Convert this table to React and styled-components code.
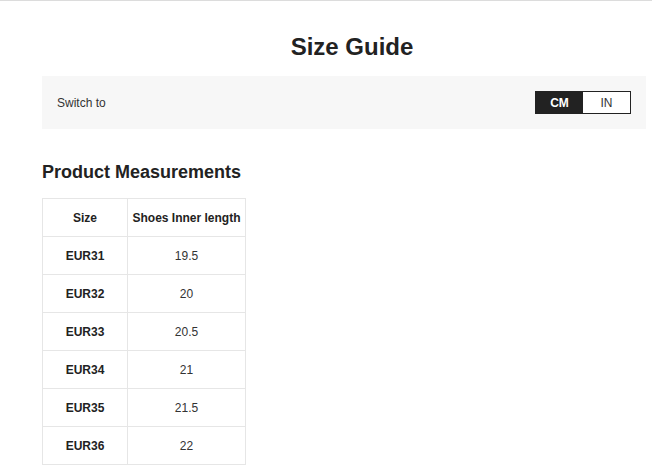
import React from "react";
import styled, { createGlobalStyle } from "styled-components";

const GlobalStyle = createGlobalStyle`
  body {
    margin: 0;
    background: #fff;
    font-family: "Liberation Sans", Arial, sans-serif;
    color: #222;
  }
`;

const rows = [
  ["EUR31", "19.5"],
  ["EUR32", "20"],
  ["EUR33", "20.5"],
  ["EUR34", "21"],
  ["EUR35", "21.5"],
  ["EUR36", "22"],
];

const Page = styled.div`
  border-top: 1px solid #dcdcdc;
  padding: 0 6px 0 42px;
`;

const Title = styled.h1`
  margin: 0;
  padding: 32px 0 0 16px;
  height: 43px;
  text-align: center;
  font-size: 24px;
  font-weight: bold;
  color: #222;
`;

const SwitchBar = styled.div`
  display: flex;
  align-items: center;
  justify-content: space-between;
  height: 53px;
  padding: 0 15px 0 15px;
  background: #f7f7f7;
  font-size: 12px;
  color: #333;
`;

const Toggle = styled.div`
  display: flex;
  border: 1px solid #222;
`;

const ToggleOption = styled.button`
  width: 47px;
  height: 21px;
  padding: 0;
  border: none;
  font-family: inherit;
  font-size: 12px;
  font-weight: ${(p) => (p.$active ? "bold" : "normal")};
  background: ${(p) => (p.$active ? "#222" : "#fff")};
  color: ${(p) => (p.$active ? "#fff" : "#333")};
`;

const SectionTitle = styled.h2`
  margin: 0;
  padding: 33px 0 0;
  height: 36px;
  font-size: 18px;
  font-weight: bold;
  color: #222;
`;

const Table = styled.table`
  border-collapse: collapse;
  table-layout: fixed;
  width: 204px;
  font-size: 12px;
  color: #333;
  th,
  td {
    border: 1px solid #e6e6e6;
    height: 37px;
    padding: 0;
    text-align: center;
  }
  th {
    font-weight: bold;
    color: #222;
  }
`;

const SizeHead = styled.th`
  width: 84px;
`;

const SizeCell = styled.td`
  font-weight: bold;
  color: #222;
`;

export default function App() {
  return (
    <>
      <GlobalStyle />
      <Page>
        <Title>Size Guide</Title>
        <SwitchBar>
          <span>Switch to</span>
          <Toggle>
            <ToggleOption $active>CM</ToggleOption>
            <ToggleOption>IN</ToggleOption>
          </Toggle>
        </SwitchBar>
        <SectionTitle>Product Measurements</SectionTitle>
        <Table>
          <thead>
            <tr>
              <SizeHead>Size</SizeHead>
              <th>Shoes Inner length</th>
            </tr>
          </thead>
          <tbody>
            {rows.map(([size, len]) => (
              <tr key={size}>
                <SizeCell>{size}</SizeCell>
                <td>{len}</td>
              </tr>
            ))}
          </tbody>
        </Table>
      </Page>
    </>
  );
}
